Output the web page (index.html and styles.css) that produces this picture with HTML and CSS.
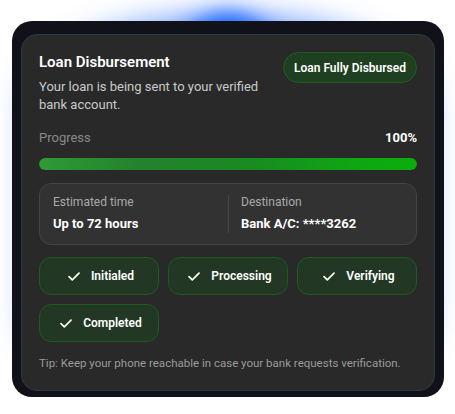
FILE: index.html
```html
<!DOCTYPE html>
<html lang="en">
<head>
<meta charset="utf-8">
<title>Loan Disbursement</title>
<link rel="stylesheet" href="styles.css">
</head>
<body>
<div class="frame">
  <section class="card">
    <header class="head">
      <div class="head-text">
        <h1 class="title">Loan Disbursement</h1>
        <p class="sub">Your loan is being sent to your verified bank account.</p>
      </div>
      <span class="badge">Loan Fully Disbursed</span>
    </header>

    <div class="progress-row">
      <span class="progress-label">Progress</span>
      <span class="progress-value">100%</span>
    </div>
    <div class="bar"><div class="bar-fill" style="width:100%"></div></div>

    <div class="info">
      <div class="info-col">
        <div class="info-label">Estimated time</div>
        <div class="info-value">Up to 72 hours</div>
      </div>
      <div class="info-col info-col-right">
        <div class="info-label">Destination</div>
        <div class="info-value">Bank A/C: ****3262</div>
      </div>
    </div>

    <div class="steps">
      <div class="step"><svg class="check" width="12" height="9" viewBox="0 0 12 9"><polyline points="1,4.6 4.3,7.8 11,1.2" fill="none" stroke="#fff" stroke-width="1.7" stroke-linecap="round" stroke-linejoin="round"/></svg><span>Initialed</span></div>
      <div class="step"><svg class="check" width="12" height="9" viewBox="0 0 12 9"><polyline points="1,4.6 4.3,7.8 11,1.2" fill="none" stroke="#fff" stroke-width="1.7" stroke-linecap="round" stroke-linejoin="round"/></svg><span>Processing</span></div>
      <div class="step"><svg class="check" width="12" height="9" viewBox="0 0 12 9"><polyline points="1,4.6 4.3,7.8 11,1.2" fill="none" stroke="#fff" stroke-width="1.7" stroke-linecap="round" stroke-linejoin="round"/></svg><span>Verifying</span></div>
      <div class="step"><svg class="check" width="12" height="9" viewBox="0 0 12 9"><polyline points="1,4.6 4.3,7.8 11,1.2" fill="none" stroke="#fff" stroke-width="1.7" stroke-linecap="round" stroke-linejoin="round"/></svg><span>Completed</span></div>
    </div>

    <p class="tip">Tip: Keep your phone reachable in case your bank requests verification.</p>
  </section>
</div>
</body>
</html>
```

FILE: styles.css
```css
html {
  margin: 0;
  padding: 0;
  background: #ffffff;
}

body {
  margin: 0;
  font-family: Roboto, "Noto Sans", "Liberation Sans", sans-serif;
  padding: 21px 0 0 12px;
}

.frame {
  position: relative;
  width: 432px;
  box-sizing: border-box;
  padding: 13px 9px 6px 9px;
  background: #111119;
  border-radius: 20px;
}

/* wide, soft halo */
.frame::before {
  content: "";
  position: absolute;
  left: 5%;
  right: 5%;
  top: 0;
  bottom: 0;
  border-radius: 50% / 22%;
  box-shadow: 0 0 30px 6px rgba(50, 115, 255, 0.7);
  z-index: -1;
}

/* bright centre of the halo */
.frame::after {
  content: "";
  position: absolute;
  left: 30%;
  right: 30%;
  top: 2px;
  bottom: 2px;
  border-radius: 50%;
  box-shadow: 0 0 22px 9px rgba(10, 90, 255, 1);
  z-index: -1;
}

.card {
  background: #29292a;
  border: 1px solid #2b3b42;
  border-radius: 16px;
  padding: 17px 17px 19px 17px;
  color: #ffffff;
}

.head {
  display: flex;
  justify-content: space-between;
  align-items: flex-start;
  gap: 16px;
}

.head-text {
  flex: 1;
}

.title {
  margin: 0;
  font-size: 15px;
  line-height: 20px;
  font-weight: 600;
  color: #ffffff;
}

.sub {
  margin: 6px 0 0 0;
  font-size: 13px;
  line-height: 17.5px;
  color: #c9c9c9;
}

.badge {
  flex: none;
  display: flex;
  align-items: center;
  height: 29px;
  padding: 0 10px;
  border: 1px solid #235a23;
  background: #1f3f21;
  border-radius: 16px;
  font-size: 12px;
  font-weight: 600;
  color: #ffffff;
}

.progress-row {
  display: flex;
  justify-content: space-between;
  margin-top: 17px;
  font-size: 13px;
  line-height: 16px;
}

.progress-label {
  color: #8a8a8a;
}

.progress-value {
  font-weight: 700;
  color: #ffffff;
}

.bar {
  margin-top: 12px;
  height: 12px;
  border-radius: 6px;
  background: #3a3a3a;
  overflow: hidden;
}

.bar-fill {
  height: 100%;
  border-radius: 6px;
  background: linear-gradient(90deg, #2f9a35 0%, #23822c 28%, #1a8a22 55%, #0ea812 85%, #0aae0a 100%);
}

.info {
  margin-top: 13px;
  display: grid;
  grid-template-columns: 1fr 1fr;
  background: #323233;
  border: 1px solid #444446;
  border-radius: 12px;
  padding: 11px 0;
}

.info-col {
  padding-left: 13px;
}

.info-col-right {
  border-left: 1px solid #474749;
  padding-left: 12px;
}

.info-label {
  font-size: 12px;
  line-height: 14px;
  color: #a9a9a9;
}

.info-value {
  margin-top: 6px;
  font-size: 13px;
  line-height: 18px;
  font-weight: 700;
  color: #ffffff;
}

.steps {
  margin-top: 12px;
  display: grid;
  grid-template-columns: repeat(3, 1fr);
  gap: 9px;
}

.step {
  height: 38px;
  box-sizing: border-box;
  display: flex;
  align-items: center;
  justify-content: center;
  gap: 11px;
  padding-left: 4px;
  background: #233824;
  border: 1px solid #1e5a20;
  border-radius: 12px;
  font-size: 12px;
  font-weight: 600;
  color: #ffffff;
}

.check {
  display: block;
  flex: none;
}

.tip {
  margin: 14px 0 0 0;
  font-size: 11.5px;
  line-height: 15px;
  color: #9b9b9b;
}
```
